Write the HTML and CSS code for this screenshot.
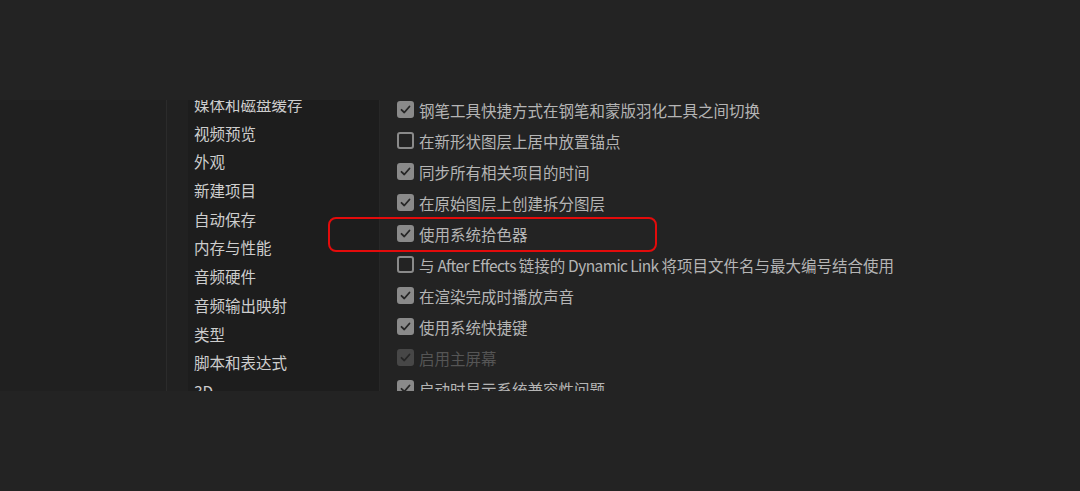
FILE: index.html
```html
<!DOCTYPE html>
<html lang="zh-CN">

<head>
    <meta charset="UTF-8">
    <title>首选项</title>
    <link rel="stylesheet" href="styles.css">
</head>

<body>
    <div class="window">
        <div class="edge"></div>
        <div class="gutter"></div>
        <ul class="sidebar">
            <li>媒体和磁盘缓存</li>
            <li>视频预览</li>
            <li>外观</li>
            <li>新建项目</li>
            <li>自动保存</li>
            <li>内存与性能</li>
            <li>音频硬件</li>
            <li>音频输出映射</li>
            <li>类型</li>
            <li>脚本和表达式</li>
            <li>3D</li>
        </ul>
        <div class="options">
            <div class="option"><span class="box on"></span>钢笔工具快捷方式在钢笔和蒙版羽化工具之间切换</div>
            <div class="option"><span class="box"></span>在新形状图层上居中放置锚点</div>
            <div class="option"><span class="box on"></span>同步所有相关项目的时间</div>
            <div class="option"><span class="box on"></span>在原始图层上创建拆分图层</div>
            <div class="option"><span class="box on"></span>使用系统拾色器</div>
            <div class="option"><span class="box"></span>与<span class="latin"> After Effects </span>链接的<span class="latin"> Dynamic Link </span>将项目文件名与最大编号结合使用</div>
            <div class="option"><span class="box on"></span>在渲染完成时播放声音</div>
            <div class="option"><span class="box on"></span>使用系统快捷键</div>
            <div class="option disabled"><span class="box on"></span>启用主屏幕</div>
            <div class="option"><span class="box on"></span>启动时显示系统兼容性问题</div>
        </div>
        <div class="highlight"></div>
    </div>
</body>

</html>
```

FILE: styles.css
```css
body {
    margin: 0;
    background-color: #232323;
    font-family: "Noto Sans CJK SC", "Noto Sans", sans-serif;
}

.window {
    position: relative;
    display: flex;
    margin-top: 100px;
    height: 291px;
    overflow: hidden;
}

.edge {
    width: 166px;
    background-color: #202020;
    border-right: 1px solid #2b2b2b;
}

.gutter {
    width: 21px;
    background-color: #212121;
}

.sidebar {
    box-sizing: border-box;
    width: 192px;
    margin: 0;
    padding: 0 0 0 6px;
    list-style: none;
    background-color: #1d1d1d;
    border-right: 1px solid #272727;
}

.sidebar li {
    height: 28.7px;
    line-height: 28.7px;
    font-size: 15.5px;
    color: #cdcdcd;
    white-space: nowrap;
}

.sidebar li:first-child {
    margin-top: -10px;
}

.options {
    flex: 1;
    padding-left: 17px;
}

.option {
    display: flex;
    align-items: center;
    height: 31px;
    font-size: 15.5px;
    color: #b5b5b5;
    white-space: pre;
}

.option .latin {
    letter-spacing: -0.6px;
}

.option:first-child {
    margin-top: -6px;
}

.box {
    box-sizing: border-box;
    width: 17px;
    height: 17px;
    margin-right: 5px;
    border: 2px solid #8a8a8a;
    border-radius: 3px;
}

.box.on {
    background-color: #8a8a8a;
    background-image: url("data:image/svg+xml,%3Csvg xmlns='http://www.w3.org/2000/svg' viewBox='0 0 13 13'%3E%3Cpath d='M2.5 6.8l2.8 2.7 5.2-6' fill='none' stroke='%23262626' stroke-width='1.8' stroke-linecap='round' stroke-linejoin='round'/%3E%3C/svg%3E");
    background-size: 13px 13px;
    background-position: center;
    background-repeat: no-repeat;
}

.option.disabled {
    color: #555;
}

.option.disabled .box {
    border-color: #474747;
    background-color: #474747;
}

.highlight {
    position: absolute;
    left: 328px;
    top: 117px;
    width: 329px;
    height: 35px;
    box-sizing: border-box;
    border: 2px solid #e30b0b;
    border-radius: 8px;
}
```
